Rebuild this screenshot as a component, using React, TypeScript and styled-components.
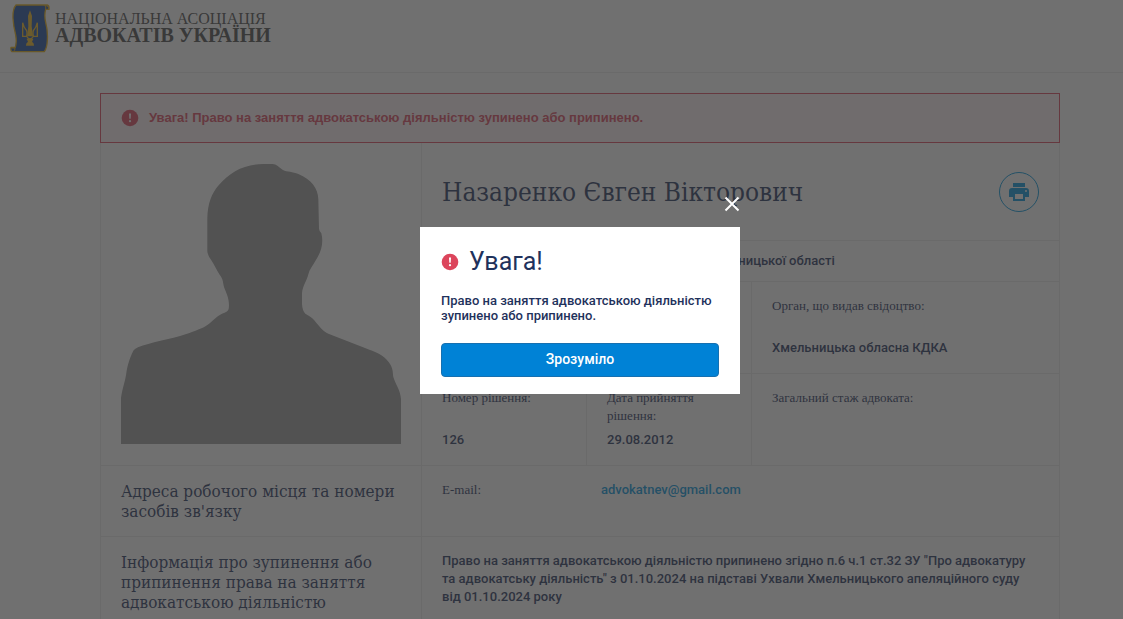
import React, { useState } from "react";
import styled, { createGlobalStyle } from "styled-components";

const slab = `"Roboto Slab", "DejaVu Serif Condensed", "DejaVu Serif", serif`;
const roman = `"Liberation Serif", "Times New Roman", serif`;
const ink = "#1f325c";
const line = "#ebebeb";
const blue = "#0082d6";
const red = "#dc455c";

const GlobalStyle = createGlobalStyle`
  *, *::before, *::after { box-sizing: border-box; }
  html { overflow: hidden; }
  body {
    margin: 0;
    background: #fff;
    color: ${ink};
    font: 500 13px/18px Roboto, sans-serif;
  }
  h1, h2, h3, p, dl, dd, dt { margin: 0; }
  svg { display: block; }
`;

const Page = styled.div`
  min-width: 1160px;
`;

const Header = styled.header`
  padding: 4px 10px 19px;
  border-bottom: 1px solid ${line};
`;

const Brand = styled.a`
  display: flex;
  gap: 5px;
  color: #484848;
  text-decoration: none;
`;

const BrandName = styled.span`
  display: flex;
  flex-direction: column;
  padding-top: 6px;
  font-family: ${roman};
`;

const BrandLine = styled.span<{ $large?: boolean }>`
  font-size: ${(p) => (p.$large ? 20 : 16)}px;
  font-weight: ${(p) => (p.$large ? 700 : 400)};
  line-height: 17px;
`;

const Container = styled.main`
  max-width: 960px;
  margin: 20px auto 0;
`;

const Alert = styled.div`
  display: flex;
  align-items: center;
  gap: 10px;
  padding: 15px 20px;
  border: 1px solid ${red};
  background: #fdf0f3;
  color: ${red};
  font: 700 13px/18px "Liberation Sans", Arial, sans-serif;
`;

const Profile = styled.div`
  border: 1px solid ${line};
  border-top: 0;
`;

const Row = styled.section`
  display: grid;
  grid-template-columns: 321px 1fr;
  border-bottom: 1px solid ${line};
`;

const Side = styled.div`
  padding: 15px 20px;
  border-right: 1px solid ${line};
`;

const Photo = styled(Side)`
  padding: 21px 20px;
`;

const SideTitle = styled.h3`
  font: 400 17px/20px ${slab};
`;

const NameBar = styled.div`
  display: flex;
  align-items: center;
  justify-content: space-between;
  padding: 29px 20px 28px;
  border-bottom: 1px solid ${line};
`;

const FullName = styled.h1`
  font: 400 26px/40px ${slab};
`;

const PrintButton = styled.button`
  display: grid;
  place-items: center;
  width: 40px;
  height: 40px;
  padding: 0;
  border: 1px solid #0095dd;
  border-radius: 50%;
  background: none;
  color: #0095dd;
  cursor: pointer;
`;

const Region = styled.p`
  padding: 11px 20px 11px 179px;
  border-bottom: 1px solid ${line};
`;

const Pair = styled.dl`
  display: grid;
  grid-template-columns: 159px 1fr;
  padding: 15px 20px;
`;

const Facts = styled.dl<{ $ruled?: boolean }>`
  display: grid;
  grid-template-columns: 164px 165px 1fr;
  border-bottom: ${(p) => (p.$ruled ? `1px solid ${line}` : "0")};
`;

const Fact = styled.div`
  min-height: 91px;
  padding: 15px 20px;

  & + & {
    border-left: 1px solid ${line};
  }
`;

const Label = styled.dt`
  font-family: ${roman};
  font-weight: 400;

  ${Fact} > & {
    min-height: 42px;
  }
`;

const Value = styled.dd`
  font-weight: 500;
`;

const MailLink = styled.a`
  color: #0095dd;
  text-decoration: none;
`;

const Note = styled.p`
  padding: 15px 20px;
`;

const Overlay = styled.div`
  position: fixed;
  inset: 0;
  display: grid;
  place-items: center;
  min-width: 1160px;
  padding-top: 2px;
  background: rgba(51, 51, 51, 0.7);
`;

const Dialog = styled.div`
  position: relative;
  width: 320px;
  padding: 20px 21px 17px;
  background: #fff;
`;

const CloseButton = styled.button`
  position: absolute;
  right: 0;
  bottom: 100%;
  display: grid;
  place-items: center;
  width: 16px;
  height: 46px;
  padding: 0;
  border: 0;
  background: none;
  color: #fff;
  cursor: pointer;
`;

const DialogTitle = styled.h2`
  display: flex;
  align-items: center;
  gap: 10px;
  margin-bottom: 16px;
  font: 400 25px/30px Roboto, sans-serif;
`;

const DialogText = styled.p`
  margin-bottom: 20px;
  line-height: 15px;
`;

const ConfirmButton = styled.button`
  display: block;
  width: 100%;
  padding: 6px 7px 8px;
  border: 1px solid #1670b0;
  border-radius: 4px;
  background: ${blue};
  color: #fff;
  font: 500 14px/18px Roboto, sans-serif;
  cursor: pointer;
`;

const WarningIcon = () => (
  <svg width="18" height="18" viewBox="0 0 18 18" aria-hidden="true">
    <circle cx="9" cy="9" r="8.3" fill={red} />
    <path d="M8 4.4h2l-.3 5.4H8.3z" fill="#fff" />
    <circle cx="9" cy="12.2" r="1.1" fill="#fff" />
  </svg>
);

const PrinterIcon = () => (
  <svg width="20" height="18" viewBox="0 0 20 18" fill="currentColor" aria-hidden="true">
    <path d="M4 0h12v4H4z" />
    <path
      fillRule="evenodd"
      d="M3 5h14a3 3 0 0 1 3 3v6h-4v4H4v-4H0V8a3 3 0 0 1 3-3zm3 6v5h8v-5zm11-4a1 1 0 1 0 0 2 1 1 0 0 0 0-2z"
    />
  </svg>
);

const Emblem = () => (
  <svg width="40" height="49" viewBox="30 11 120 147" aria-hidden="true">
    <path
      d="M48 14 H142 Q148 15 147 27 H137 Q132 44 137 66 Q144 92 142 120 Q141 143 133 154 H36 Q31 151 33 141 H46 Q51 124 47 104 Q40 77 39 54 Q38 25 48 14z"
      fill="#1a4a9e"
      stroke="#e5ad13"
      strokeWidth="4"
      strokeLinejoin="round"
    />
    <path d="M134 16 Q139 18 137 27 H146 Q147 16 134 16z M34 143 H45 Q46 151 40 153" fill="#1a4a9e" stroke="#e5ad13" strokeWidth="3" />
    <g fill="#f0b81c">
      <path d="M90 30 L96 47 L95 78 L99 108 H81 L85 78 L84 47z" />
      <path d="M80 116 Q90 110 100 116 L96 124 Q103 129 102 136 H78 Q77 129 84 124z" />
    </g>
    <path
      d="M68 67 V108 H80 Q83 92 77 87 Q72 82 68 67 M112 67 V108 H100 Q97 92 103 87 Q108 82 112 67 M80 108 L90 120 L100 108"
      fill="none"
      stroke="#f0b81c"
      strokeWidth="4"
    />
  </svg>
);

const Silhouette = () => (
  <svg width="280" height="280" viewBox="33 42 840 840" role="img" aria-label="Фото">
    <path
      fill="#999"
      d="M33 882 V743 C38 710 46 695 50 662 C56 632 65 612 71 601 Q75 596 84 592 C120 577 180 568 229 552 C255 543 278 535 292 525 C310 512 322 497 336 491 Q353 486 356 477 C360 450 350 432 342 411 C338 395 340 390 330 376 C320 362 314 345 304 331 Q292 314 292 304 V205 C293 160 305 130 326 106 C360 66 402 42 460 42 H487 C500 42 507 53 519 60 C531 66 548 65 565 72 C604 88 624 115 625 148 L627 236 Q628 245 634 250 C642 282 632 308 616 333 C609 346 598 358 595 373 C591 392 578 407 576 430 V462 Q577 482 586 491 C596 498 606 501 614 512 C626 527 640 545 657 552 L765 594 C795 605 822 616 836 636 C850 655 848 666 850 681 C857 704 871 720 873 747 V882z"
    />
  </svg>
);

export default function App() {
  const [open, setOpen] = useState(true);

  return (
    <>
      <GlobalStyle />
      <Page>
        <Header>
          <Brand href="#">
            <Emblem />
            <BrandName>
              <BrandLine>НАЦІОНАЛЬНА АСОЦІАЦІЯ</BrandLine>
              <BrandLine $large>АДВОКАТІВ УКРАЇНИ</BrandLine>
            </BrandName>
          </Brand>
        </Header>

        <Container>
          <Alert role="alert">
            <WarningIcon />
            Увага! Право на заняття адвокатською діяльністю зупинено або припинено.
          </Alert>

          <Profile>
            <Row>
              <Photo>
                <Silhouette />
              </Photo>
              <div>
                <NameBar>
                  <FullName>Назаренко Євген Вікторович</FullName>
                  <PrintButton type="button" aria-label="Друкувати">
                    <PrinterIcon />
                  </PrintButton>
                </NameBar>
                <Region>Рада адвокатів Хмельницької області</Region>
                <Facts $ruled>
                  <Fact />
                  <Fact />
                  <Fact>
                    <Label>Орган, що видав свідоцтво:</Label>
                    <Value>Хмельницька обласна КДКА</Value>
                  </Fact>
                </Facts>
                <Facts>
                  <Fact>
                    <Label>Номер рішення:</Label>
                    <Value>126</Value>
                  </Fact>
                  <Fact>
                    <Label>Дата прийняття рішення:</Label>
                    <Value>29.08.2012</Value>
                  </Fact>
                  <Fact>
                    <Label>Загальний стаж адвоката:</Label>
                  </Fact>
                </Facts>
              </div>
            </Row>

            <Row>
              <Side>
                <SideTitle>Адреса робочого місця та номери засобів зв'язку</SideTitle>
              </Side>
              <Pair>
                <Label>E-mail:</Label>
                <Value>
                  <MailLink href="mailto:advokatnev@gmail.com">advokatnev@gmail.com</MailLink>
                </Value>
              </Pair>
            </Row>

            <Row>
              <Side>
                <SideTitle>Інформація про зупинення або припинення права на заняття адвокатською діяльністю</SideTitle>
              </Side>
              <Note>
                Право на заняття адвокатською діяльністю припинено згідно п.6 ч.1 ст.32 ЗУ "Про адвокатуру та адвокатську
                діяльність" з 01.10.2024 на підставі Ухвали Хмельницького апеляційного суду від 01.10.2024 року
              </Note>
            </Row>
          </Profile>
        </Container>
      </Page>

      {open && (
        <Overlay>
          <Dialog role="dialog" aria-modal="true" aria-labelledby="dialog-title">
            <CloseButton type="button" aria-label="Закрити" onClick={() => setOpen(false)}>
              <svg width="16" height="16" viewBox="0 0 16 16" stroke="currentColor" strokeWidth="2" aria-hidden="true">
                <path d="M1.5 1.5l13 13M14.5 1.5l-13 13" />
              </svg>
            </CloseButton>
            <DialogTitle id="dialog-title">
              <WarningIcon />
              Увага!
            </DialogTitle>
            <DialogText>Право на заняття адвокатською діяльністю зупинено або припинено.</DialogText>
            <ConfirmButton type="button" onClick={() => setOpen(false)}>
              Зрозуміло
            </ConfirmButton>
          </Dialog>
        </Overlay>
      )}
    </>
  );
}
